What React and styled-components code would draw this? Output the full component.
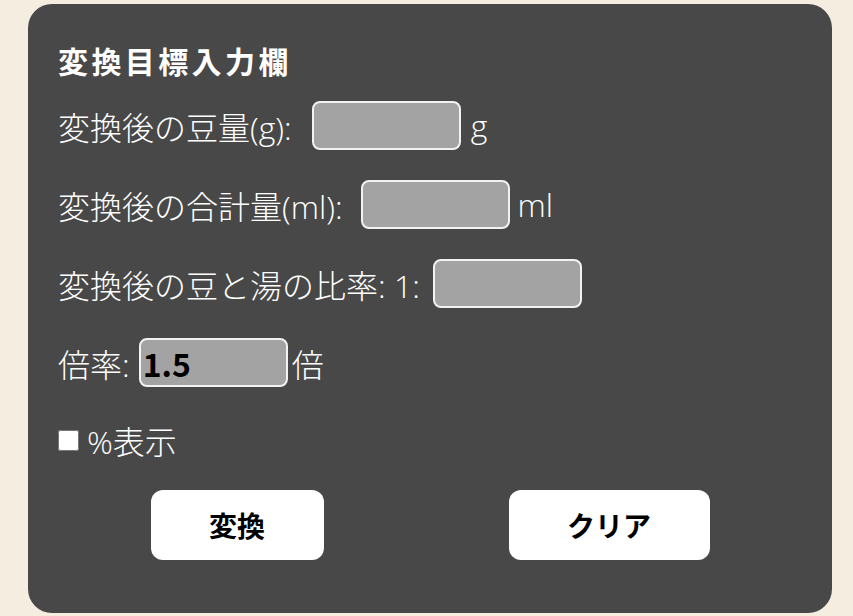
import styled, { createGlobalStyle } from "styled-components";

const GlobalStyle = createGlobalStyle`
    body {
        margin: 0;
        background-color: #f5eddf;
        font-family: "Open Sans", "Noto Sans CJK JP", sans-serif;
    }
`

const Page = styled.div`
    padding: 4px 21px 0 28px;
`

const Panel = styled.form`
    background-color: #484848;
    color: white;
    border-radius: 24px;
    height: 609px;
    box-sizing: border-box;
    padding: 36px 30px 0 30px;
    display: flex;
    flex-direction: column;
`

const Title = styled.h2`
    margin: 0 0 21px 0;
    font-family: "Noto Sans CJK JP", sans-serif;
    font-size: 30px;
    line-height: 40px;
    font-weight: 700;
    letter-spacing: 3.4px;
`

const Row = styled.label`
    display: flex;
    align-items: center;
    height: 49px;
    font-size: 32px;
    font-weight: 300;
    margin-bottom: ${(p) => p.$after || 30}px;
    white-space: pre;
`

const NumberInput = styled.input`
    box-sizing: border-box;
    width: 149px;
    height: 49px;
    margin: 0 ${(p) => p.$right ?? 10}px 0 ${(p) => p.$left ?? 12}px;
    background-color: #a3a3a3;
    border: 2px solid #f2f2f2;
    border-radius: 8px;
    padding: 1px 2px;
    font-family: "Noto Sans CJK JP", sans-serif;
    font-size: 32px;
    font-weight: 700;
    color: black;
    outline: none;
`

const CheckRow = styled.label`
    display: flex;
    align-items: center;
    gap: 8px;
    font-size: 32px;
    font-weight: 300;
    height: 30px;
    margin-bottom: 35px;
`

const Check = styled.input`
    width: 21px;
    height: 21px;
    margin: 0;
`

const Buttons = styled.div`
    display: flex;
    justify-content: space-around;
`

const Button = styled.button`
    width: ${(p) => p.$w}px;
    height: 70px;
    background-color: white;
    border: none;
    border-radius: 12px;
    font-family: "Noto Sans CJK JP", sans-serif;
    font-size: 28px;
    font-weight: 700;
    color: black;
`

export default function App() {
    return (
        <>
            <GlobalStyle />
            <Page>
                <Panel onSubmit={(e) => e.preventDefault()}>
                    <Title>変換目標入力欄</Title>

                    <Row>
                        変換後の豆量(g):
                        <NumberInput type="text" $left={20} />
                        g
                    </Row>

                    <Row>
                        変換後の合計量(ml):
                        <NumberInput type="text" $left={18} $right={8} />
                        ml
                    </Row>

                    <Row>
                        変換後の豆と湯の比率: 1:
                        <NumberInput type="text" $left={13} />
                    </Row>

                    <Row $after={38}>
                        倍率:
                        <NumberInput type="text" defaultValue="1.5" $left={9} $right={4} />
                        倍
                    </Row>

                    <CheckRow>
                        <Check type="checkbox" />
                        %表示
                    </CheckRow>

                    <Buttons>
                        <Button type="button" $w={173}>変換</Button>
                        <Button type="button" $w={201}>クリア</Button>
                    </Buttons>
                </Panel>
            </Page>
        </>
    )
}
